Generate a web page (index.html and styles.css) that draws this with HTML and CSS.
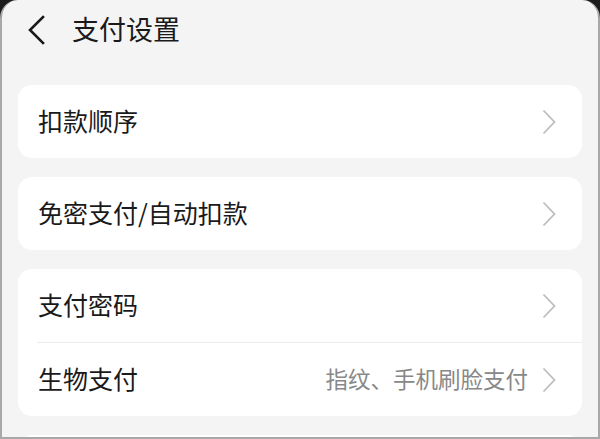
FILE: index.html
```html
<!DOCTYPE html>
<html lang="zh-CN">
<head>
<meta charset="utf-8">
<title>支付设置</title>
<link rel="stylesheet" href="styles.css">
</head>
<body>
<div class="screen">
  <header class="header">
    <svg class="back" width="20" height="30" viewBox="0 0 20 30"><path d="M17 2 L4 15 L17 28" fill="none" stroke="#1a1a1a" stroke-width="2.6" stroke-linecap="square"/></svg>
    <h1 class="title">支付设置</h1>
  </header>
  <main class="list">
    <section class="card">
      <div class="row"><span class="label">扣款顺序</span><span class="chev"><svg width="14" height="26" viewBox="0 0 14 26"><path d="M1.5 1.5 L12.5 13 L1.5 24.5" fill="none" stroke="#bdbdbd" stroke-width="1.8"/></svg></span></div>
    </section>
    <section class="card">
      <div class="row"><span class="label">免密支付/自动扣款</span><span class="chev"><svg width="14" height="26" viewBox="0 0 14 26"><path d="M1.5 1.5 L12.5 13 L1.5 24.5" fill="none" stroke="#bdbdbd" stroke-width="1.8"/></svg></span></div>
    </section>
    <section class="card">
      <div class="row"><span class="label">支付密码</span><span class="chev"><svg width="14" height="26" viewBox="0 0 14 26"><path d="M1.5 1.5 L12.5 13 L1.5 24.5" fill="none" stroke="#bdbdbd" stroke-width="1.8"/></svg></span></div>
      <div class="divider"></div>
      <div class="row"><span class="label">生物支付</span><span class="value">指纹、手机刷脸支付</span><span class="chev"><svg width="14" height="26" viewBox="0 0 14 26"><path d="M1.5 1.5 L12.5 13 L1.5 24.5" fill="none" stroke="#bdbdbd" stroke-width="1.8"/></svg></span></div>
    </section>
    <section class="card card-empty"></section>
  </main>
</div>
</body>
</html>
```
FILE: styles.css
```css
html, body {
  margin: 0;
  padding: 0;
  background: #1c1c1c;
}
.screen {
  width: 600px;
  height: 439px;
  box-sizing: border-box;
  background: #f4f4f4;
  border-left: 2px solid #a8a8a8;
  border-right: 2px solid #a8a8a8;
  border-bottom: 2px solid #a8a8a8;
  border-top-left-radius: 18px;
  border-top-right-radius: 18px;
  overflow: hidden;
  font-family: "Noto Sans CJK SC", "Noto Sans", sans-serif;
  color: #1a1a1a;
}
.header {
  height: 60px;
  display: flex;
  align-items: center;
  padding-left: 24px;
}
.back {
  display: block;
}
.title {
  margin: 0 0 3px 26px;
  font-size: 27px;
  font-weight: 400;
  line-height: 1;
}
.list {
  padding: 25px 16px 0 16px;
  display: flex;
  flex-direction: column;
  gap: 19px;
}
.card {
  background: #ffffff;
  border-radius: 14px;
  flex-shrink: 0;
}
.card-empty {
  height: 73px;
}
.row {
  height: 73px;
  display: flex;
  align-items: center;
  padding: 0 26px 0 20px;
}
.label {
  font-size: 25px;
  line-height: 1;
  flex: 1;
  padding-bottom: 3px;
}
.value {
  font-size: 22.5px;
  color: #888888;
  line-height: 1;
  margin-right: 14px;
  padding-bottom: 3px;
}
.chev {
  display: flex;
}
.divider {
  height: 1px;
  background: #ededed;
  margin-left: 19px;
}
```
